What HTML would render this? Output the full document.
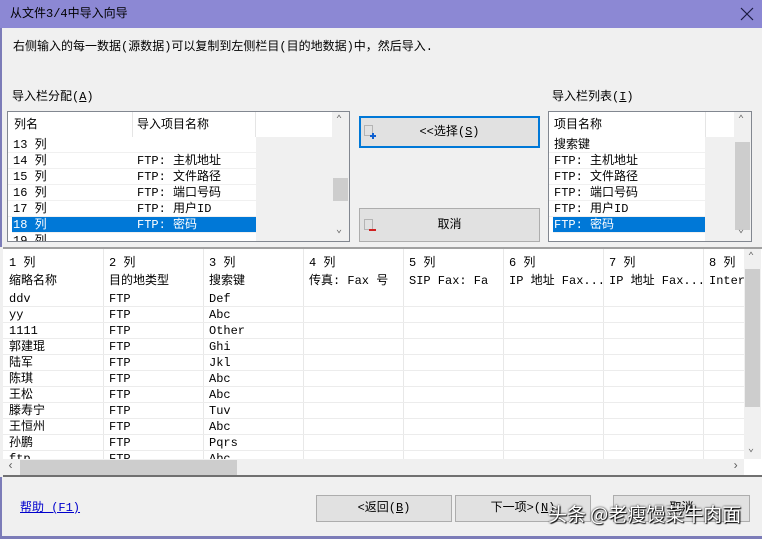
<!DOCTYPE html>
<html><head><meta charset="utf-8">
<style>
*{margin:0;padding:0;box-sizing:border-box}
body{width:762px;height:539px;background:#f0f0f0;position:relative;overflow:hidden;font-family:"Liberation Mono","Noto Sans CJK SC",monospace;font-size:12px;color:#000}
.a{position:absolute;white-space:nowrap}
.t{line-height:16px}
.sb{position:absolute;background:#f0f0f0}
.btn{position:absolute;background:#e1e1e1;border:1px solid #adadad;text-align:center;font-size:12px}
.row{position:absolute;height:16px;line-height:16px;border-bottom:1px solid #f0f0f0}
.gv{position:absolute;top:0;width:1px;background:#e8e8e8}
</style></head><body>
<div class="a" style="left:0;top:0;width:762px;height:28px;background:#8c88d4"></div>
<div class="a" style="left:10px;top:6px;font-size:12px;line-height:16px">从文件3/4中导入向导</div>
<svg class="a" style="left:740px;top:7px" width="14" height="14"><path d="M1 1L13 13M13 1L1 13" stroke="#1a1a40" stroke-width="1.2"/></svg>
<div class="a" style="left:0;top:28px;width:2px;height:511px;background:#7c7cb8"></div>
<div class="a t" style="left:13px;top:39px">右侧输入的每一数据(源数据)可以复制到左侧栏目(目的地数据)中，然后导入.</div>
<div class="a t" style="left:12px;top:89px">导入栏分配(<u>A</u>)</div>
<div class="a t" style="left:552px;top:89px">导入栏列表(<u>I</u>)</div>

<div class="a" style="left:7px;top:111px;width:343px;height:131px;background:#fff;border:1px solid #828790;overflow:hidden">
 <div class="a" style="left:124px;top:0;width:1px;height:25px;background:#e5e5e5"></div>
 <div class="a" style="left:247px;top:0;width:1px;height:25px;background:#e5e5e5"></div>
 <div class="a t" style="left:6px;top:5px">列名</div>
 <div class="a t" style="left:129px;top:5px">导入项目名称</div>
 <div class="a" style="left:0;top:25px;width:248px;height:104px;background:#fff"></div>
 <div class="a" style="left:248px;top:25px;width:76px;height:104px;background:#f0f0f0"></div>
 <div class="row" style="left:0;top:25px;width:248px;padding-left:5px">13 列</div>
 <div class="row" style="left:0;top:41px;width:248px;padding-left:5px">14 列<span class="a" style="left:129px">FTP: 主机地址</span></div>
 <div class="row" style="left:0;top:57px;width:248px;padding-left:5px">15 列<span class="a" style="left:129px">FTP: 文件路径</span></div>
 <div class="row" style="left:0;top:73px;width:248px;padding-left:5px">16 列<span class="a" style="left:129px">FTP: 端口号码</span></div>
 <div class="row" style="left:0;top:89px;width:248px;padding-left:5px">17 列<span class="a" style="left:129px">FTP: 用户ID</span></div>
 <div class="row" style="left:4px;top:105px;width:244px;padding-left:1px;background:#0078d7;color:#fff">18 列<span class="a" style="left:125px">FTP: 密码</span></div>
 <div class="row" style="left:0;top:121px;width:248px;padding-left:5px">19 列</div>
 <div class="sb" style="left:324px;top:0;width:17px;height:129px"></div>
 <div class="a" style="left:325px;top:66px;width:15px;height:23px;background:#cdcdcd"></div>
 <div class="a" style="left:328px;top:2px;font-size:10px;color:#606060">&#8963;</div>
 <div class="a" style="left:328px;top:112px;font-size:10px;color:#606060">&#8964;</div>
</div>

<div class="btn" style="left:359px;top:116px;width:181px;height:32px;border:2px solid #0078d7;line-height:28px">&lt;&lt;选择(<u>S</u>)</div>
<svg class="a" style="left:363px;top:124px" width="14" height="16"><rect x="1.5" y="1.5" width="8" height="10" fill="none" stroke="#888" stroke-dasharray="1 1"/><path d="M10 9v6M7 12h6" stroke="#1060d0" stroke-width="2"/></svg>
<div class="btn" style="left:359px;top:208px;width:181px;height:34px;line-height:32px">取消</div>
<svg class="a" style="left:363px;top:218px" width="14" height="16"><rect x="1.5" y="1.5" width="8" height="10" fill="none" stroke="#888" stroke-dasharray="1 1"/><path d="M6 12h7" stroke="#d02020" stroke-width="2"/></svg>

<div class="a" style="left:548px;top:111px;width:204px;height:131px;background:#fff;border:1px solid #828790;overflow:hidden">
 <div class="a" style="left:156px;top:0;width:30px;height:25px;background:#fff;border-left:1px solid #e5e5e5"></div>
 <div class="a" style="left:156px;top:25px;width:30px;height:104px;background:#f0f0f0"></div>
 <div class="a t" style="left:5px;top:5px">项目名称</div>
 <div class="row" style="left:0;top:25px;width:156px;padding-left:5px">搜索键</div>
 <div class="row" style="left:0;top:41px;width:156px;padding-left:5px">FTP: 主机地址</div>
 <div class="row" style="left:0;top:57px;width:156px;padding-left:5px">FTP: 文件路径</div>
 <div class="row" style="left:0;top:73px;width:156px;padding-left:5px">FTP: 端口号码</div>
 <div class="row" style="left:0;top:89px;width:156px;padding-left:5px">FTP: 用户ID</div>
 <div class="row" style="left:4px;top:105px;width:152px;padding-left:1px;background:#0078d7;color:#fff">FTP: 密码</div>
 <div class="sb" style="left:185px;top:0;width:17px;height:129px"></div>
 <div class="a" style="left:186px;top:30px;width:15px;height:88px;background:#cdcdcd"></div>
 <div class="a" style="left:189px;top:2px;font-size:10px;color:#606060">&#8963;</div>
 <div class="a" style="left:189px;top:112px;font-size:10px;color:#606060">&#8964;</div>
</div>

<div class="a" style="left:0;top:247px;width:762px;height:230px;background:#fff;border-top:2px solid #a0a0a0;border-bottom:2px solid #707070;overflow:hidden">
 <div class="gv" style="left:103px;height:210px"></div>
 <div class="gv" style="left:203px;height:210px"></div>
 <div class="gv" style="left:303px;height:210px"></div>
 <div class="gv" style="left:403px;height:210px"></div>
 <div class="gv" style="left:503px;height:210px"></div>
 <div class="gv" style="left:603px;height:210px"></div>
 <div class="gv" style="left:703px;height:210px"></div>
 <div class="a t" style="left:9px;top:6px">1 列</div><div class="a t" style="left:109px;top:6px">2 列</div><div class="a t" style="left:209px;top:6px">3 列</div><div class="a t" style="left:309px;top:6px">4 列</div><div class="a t" style="left:409px;top:6px">5 列</div><div class="a t" style="left:509px;top:6px">6 列</div><div class="a t" style="left:609px;top:6px">7 列</div><div class="a t" style="left:709px;top:6px">8 列</div>
 <div class="a t" style="left:9px;top:24px">缩略名称</div><div class="a t" style="left:109px;top:24px">目的地类型</div><div class="a t" style="left:209px;top:24px">搜索键</div><div class="a t" style="left:309px;top:24px">传真: Fax 号</div><div class="a t" style="left:409px;top:24px">SIP Fax: Fa</div><div class="a t" style="left:509px;top:24px">IP 地址 Fax...</div><div class="a t" style="left:609px;top:24px">IP 地址 Fax...</div><div class="a t" style="left:709px;top:24px">Interr</div>
 <div id="rows"></div>
 <div class="sb" style="left:744px;top:0;width:17px;height:210px"></div>
 <div class="a" style="left:745px;top:20px;width:15px;height:138px;background:#cdcdcd"></div>
 <div class="a" style="left:748px;top:2px;font-size:10px;color:#606060">&#8963;</div>
 <div class="a" style="left:748px;top:194px;font-size:10px;color:#606060">&#8964;</div>
 <div class="sb" style="left:3px;top:210px;width:741px;height:17px"></div>
 <div class="a" style="left:20px;top:211px;width:217px;height:15px;background:#cdcdcd"></div>
 <div class="a" style="left:7px;top:210px;font-size:12px;color:#606060">&lsaquo;</div>
 <div class="a" style="left:732px;top:210px;font-size:12px;color:#606060">&rsaquo;</div>
</div>
<div class="a" style="left:0;top:247px;width:3px;height:230px;background:#f0f0f0"></div>

<div class="a t" style="left:20px;top:500px;color:#0000cc;text-decoration:underline">帮助 (F1)</div>
<div class="btn" style="left:316px;top:495px;width:136px;height:27px;line-height:25px">&lt;返回(<u>B</u>)</div>
<div class="btn" style="left:455px;top:495px;width:136px;height:27px;line-height:25px">下一项&gt;(<u>N</u>)</div>
<div class="btn" style="left:613px;top:495px;width:137px;height:27px;line-height:25px">取消</div>
<div class="a" style="left:548px;top:501px;font-family:'Noto Sans CJK SC',sans-serif;font-size:19px;line-height:26px;color:#fff;text-shadow:0 0 2px #000,1px 1px 1px #000">头条 @老瘦馒菜牛肉面</div>
<div class="a" style="left:0;top:536px;width:762px;height:3px;background:#7c7cb8"></div>

<script>
var d=[["ddv","Def"],["yy","Abc"],["1111","Other"],["郭建琨","Ghi"],["陆军","Jkl"],["陈琪","Abc"],["王松","Abc"],["滕寿宁","Tuv"],["王恒州","Abc"],["孙鹏","Pqrs"],["ftp","Abc"]];
var h="";d.forEach(function(r,i){var y=42+i*16;h+='<div class="a" style="left:3px;top:'+(y+15)+'px;width:741px;height:1px;background:#ececec"></div>'+
'<div class="a t" style="left:9px;top:'+y+'px">'+r[0]+'</div><div class="a t" style="left:109px;top:'+y+'px">FTP</div><div class="a t" style="left:209px;top:'+y+'px">'+r[1]+'</div>';});
document.getElementById("rows").innerHTML=h;
</script>
</body></html>
